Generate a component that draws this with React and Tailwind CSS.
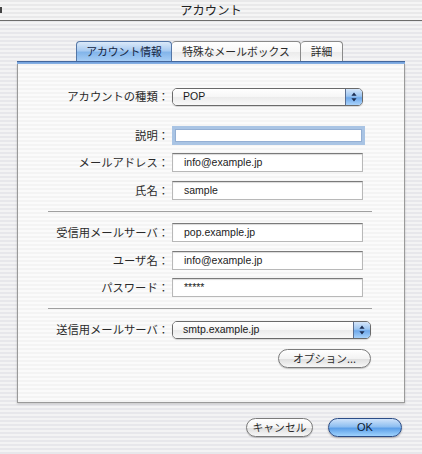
import React from "react";

function Arrows() {
  return (
    <svg width="6" height="10" viewBox="0 0 6 10">
      <path d="M3 0.5 L5.6 3.8 L0.4 3.8 Z M3 9.5 L5.6 6.2 L0.4 6.2 Z" fill="#1b2c52" />
    </svg>
  );
}

function Popup({ value, width }) {
  return (
    <div
      className={`flex h-[18px] ${width} rounded-[5px] border border-[#6a6a6a] overflow-hidden shadow-[0_1px_1px_rgba(0,0,0,0.15)]`}
    >
      <div className="flex-1 flex items-center pl-[10px] bg-[linear-gradient(180deg,#ffffff_0%,#f6f6f6_50%,#ebebeb_51%,#f8f8f8_100%)] font-['Liberation_Sans','Noto_Sans_CJK_JP',sans-serif] text-[10.5px] text-[#1a1a1a]">
        {value}
      </div>
      <div className="w-[17px] flex items-center justify-center border-l border-[#5a6f92] bg-[linear-gradient(180deg,#d5e6fa_0%,#9cc5f1_45%,#6ea8ea_55%,#a8d2fb_100%)]">
        <Arrows />
      </div>
    </div>
  );
}

function Field({ value, focus }) {
  if (focus) {
    return (
      <div className="h-[19px] w-[193px] border-[3px] border-[#a9c4e4] bg-white shadow-[inset_0_0_0_1px_#94afd3]" />
    );
  }
  return (
    <div className="h-[19px] w-[191px] flex items-center pl-[11px] bg-white border border-[#b8b8b8] border-t-[#7a7a7a] shadow-[inset_0_1px_1px_rgba(0,0,0,0.15)] font-['Liberation_Sans','Noto_Sans_CJK_JP',sans-serif] text-[10.5px] text-[#222]">
      {value}
    </div>
  );
}

function Row({ label, children, className = "" }) {
  return (
    <div className={`flex items-center ${className}`}>
      <div className="w-[151px] text-right text-[11.3px] whitespace-nowrap text-[#2a2a2a] leading-none">
        {label}
      </div>
      <div className="ml-[3px]">{children}</div>
    </div>
  );
}

function Sep({ className = "" }) {
  return (
    <div className={`ml-[30px] w-[324px] h-[2px] border-t border-[#a0a0a0] border-b-white ${className}`} />
  );
}

export default function App() {
  return (
    <div className="w-[422px] h-[454px] overflow-hidden flex flex-col bg-[repeating-linear-gradient(180deg,#e7e7eb_0px,#e7e7eb_2px,#f3f3f4_2px,#f3f3f4_4px)] font-['Noto_Sans_CJK_JP',sans-serif] text-[#2a2a2a]">
      {/* title bar */}
      <div className="h-[21px] shrink-0 flex items-center border-b border-[#6c6c6c] bg-[repeating-linear-gradient(180deg,#e9e9ea_0px,#e9e9ea_2px,#f5f5f5_2px,#f5f5f5_4px)]">
        <div className="w-[2px] h-[6px] bg-[#444] self-center" />
        <div className="flex-1 text-center text-[12.3px] leading-none text-[#222] pr-[2px]">
          アカウント
        </div>
      </div>

      {/* tabs */}
      <div className="flex h-[20px] mt-[20px] pl-[76px] shrink-0 text-[10.8px] leading-none">
        <div className="w-[96px] flex items-center justify-center rounded-t-[4px] border border-b-0 border-[#5476a6] bg-[linear-gradient(180deg,#dbe9f9_0%,#a9cbf1_45%,#83b5ea_55%,#a6cdf5_100%)] text-[#14243f]">
          アカウント情報
        </div>
        <div className="w-[129px] flex items-center justify-center rounded-t-[4px] border border-b-0 border-l-0 border-[#8a8a8a] bg-[linear-gradient(180deg,#ffffff_0%,#f7f7f7_50%,#ebebeb_55%,#f8f8f8_100%)]">
          特殊なメールボックス
        </div>
        <div className="w-[42px] flex items-center justify-center rounded-t-[4px] border border-b-0 border-l-0 border-[#8a8a8a] bg-[linear-gradient(180deg,#ffffff_0%,#f7f7f7_50%,#ebebeb_55%,#f8f8f8_100%)]">
          詳細
        </div>
      </div>
      <div className="mx-[17px] h-[3px] shrink-0 bg-[linear-gradient(180deg,#44679c_0px,#44679c_1px,#6f9fdc_1px,#8fb7e8_3px)]" />

      {/* panel */}
      <div className="mx-[17px] h-[339px] shrink-0 flex flex-col border-x border-b border-[#9a9a9a] shadow-[0_1px_2px_rgba(0,0,0,0.2)] bg-[repeating-linear-gradient(180deg,#f4f4f4_0px,#f4f4f4_2px,#fbfbfb_2px,#fbfbfb_4px)]">
        <Row label="アカウントの種類：" className="mt-[24px]">
          <Popup value="POP" width="w-[191px]" />
        </Row>
        <Row label="説明：" className="mt-[20px]">
          <Field focus />
        </Row>
        <Row label="メールアドレス：" className="mt-[8px]">
          <Field value="info@example.jp" />
        </Row>
        <Row label="氏名：" className="mt-[9px]">
          <Field value="sample" />
        </Row>
        <Sep className="mt-[11px]" />
        <Row label="受信用メールサーバ：" className="mt-[10px]">
          <Field value="pop.example.jp" />
        </Row>
        <Row label="ユーザ名：" className="mt-[9px]">
          <Field value="info@example.jp" />
        </Row>
        <Row label="パスワード：" className="mt-[8px]">
          <Field value="*****" />
        </Row>
        <Sep className="mt-[11px]" />
        <Row label="送信用メールサーバ：" className="mt-[11px]">
          <Popup value="smtp.example.jp" width="w-[199px]" />
        </Row>
        <div className="flex mt-[10px] pl-[260px]">
          <div className="w-[93px] h-[19px] flex items-center justify-center rounded-full border border-[#7b7b7b] bg-[linear-gradient(180deg,#ffffff_0%,#f3f3f3_50%,#e0e0e0_55%,#f7f7f7_100%)] shadow-[0_1px_1px_rgba(0,0,0,0.2)] text-[10.8px] leading-none">
            オプション...
          </div>
        </div>
      </div>

      {/* bottom buttons */}
      <div className="flex justify-end gap-[15px] pr-[20px] mt-[15px]">
        <div className="w-[67px] h-[19px] flex items-center justify-center rounded-full border border-[#7b7b7b] bg-[linear-gradient(180deg,#ffffff_0%,#f3f3f3_50%,#e0e0e0_55%,#f7f7f7_100%)] shadow-[0_1px_1px_rgba(0,0,0,0.2)] text-[10.8px] leading-none">
          キャンセル
        </div>
        <div className="w-[74px] h-[19px] flex items-center justify-center rounded-full border border-[#2b4c86] bg-[linear-gradient(180deg,#cfe3fa_0%,#8ebff1_45%,#5c9fe8_55%,#9fd3fd_100%)] shadow-[0_1px_2px_rgba(0,0,0,0.3)] font-['Liberation_Sans',sans-serif] text-[11px] leading-none text-[#0c1a33]">
          OK
        </div>
      </div>
    </div>
  );
}
